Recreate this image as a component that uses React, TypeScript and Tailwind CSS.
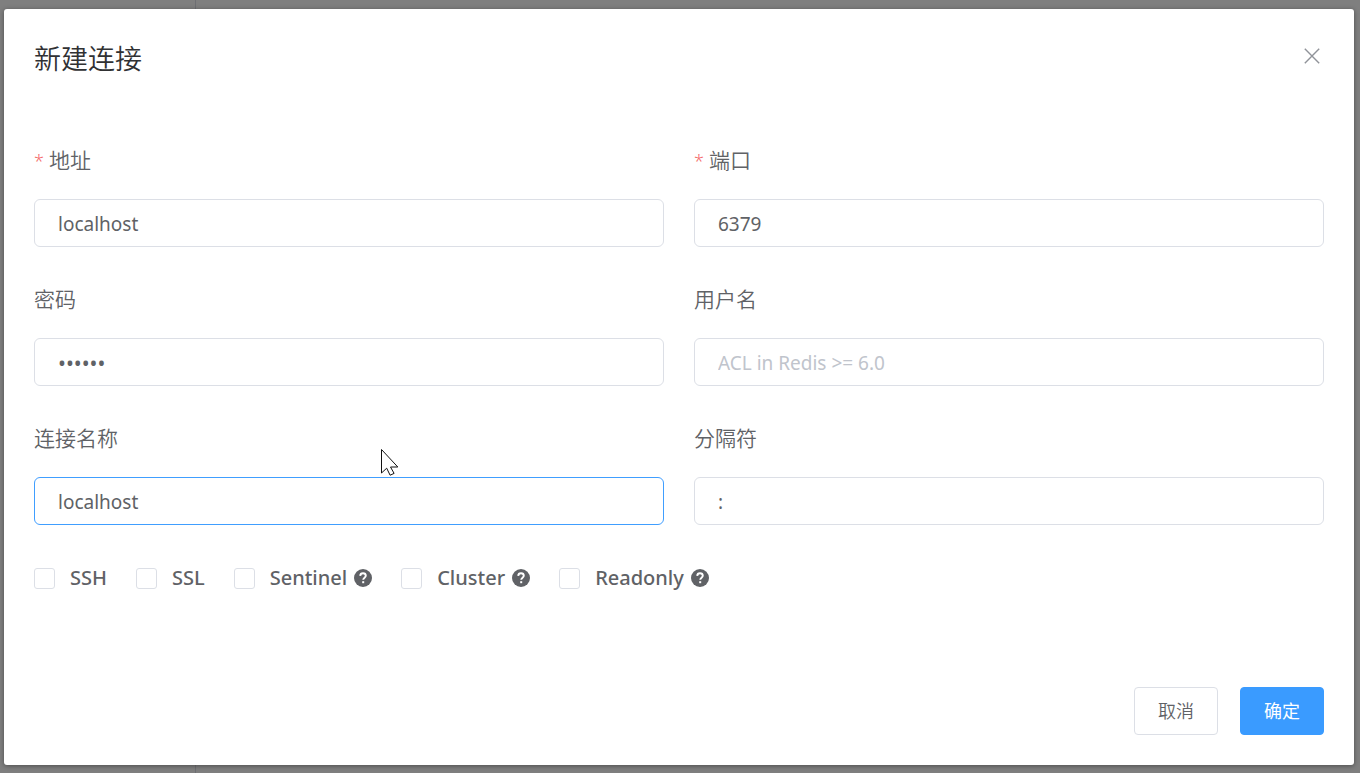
import { useState } from 'react';

interface FieldProps {
    id: string;
    label: string;
    value?: string;
    type?: string;
    placeholder?: string;
    required?: boolean;
    active?: boolean;
}

const options = [
    { id: 'ssh', label: 'SSH', help: false },
    { id: 'ssl', label: 'SSL', help: false },
    { id: 'sentinel', label: 'Sentinel', help: true },
    { id: 'cluster', label: 'Cluster', help: true },
    { id: 'readonly', label: 'Readonly', help: true },
];

const Field = ({ id, label, value = '', type = 'text', placeholder, required, active }: FieldProps) => {
    const [text, setText] = useState(value);
    return (
        <div>
            <label htmlFor={id} className="flex h-[60px] items-center gap-[5px] pt-0.5 text-[21px] font-[350] text-[#606266]">
                {required && <span className="text-lg text-[#f56c6c]">*</span>}
                {label}
            </label>
            <input
                id={id}
                type={type}
                value={text}
                placeholder={placeholder}
                onChange={(e) => setText(e.target.value)}
                className={`mt-[9px] block h-12 w-full rounded-md border bg-white px-[23px] pt-0.5 text-[#606266] outline-none placeholder:text-[#c0c4cc] focus:border-[#409eff] ${type === 'password' ? 'text-[21px]' : 'text-[19px]'} ${active ? 'border-[#409eff]' : 'border-[#dcdfe6]'}`}
            />
        </div>
    )
}

const HelpIcon = () => (
    <svg className="h-[18px] w-[18px]" viewBox="0 0 18 18" aria-hidden="true">
        <circle cx="9" cy="9" r="9" fill="#606266" />
        <path d="M6.2 6.9C6.3 5.2 7.4 4.3 9 4.3s2.8 1 2.8 2.5c0 1.9-2.6 1.9-2.6 4" fill="none" stroke="#fff" strokeWidth="1.9" />
        <rect x="8.2" y="12.2" width="2" height="2" fill="#fff" />
    </svg>
)

const Pointer = () => (
    <svg className="pointer-events-none absolute left-[377px] top-[440px] h-7 w-5" viewBox="0 0 20 28" aria-hidden="true">
        <path d="M.5.5V24l5.2-4.8 3.4 7 4-1.8-3.6-6.4h7.3z" fill="#fff" stroke="#111" strokeWidth="1" />
    </svg>
)

const App = () => {
    return (
        <div className="relative min-h-screen bg-white font-['Noto_Sans','Noto_Sans_CJK_SC',sans-serif]">
            <aside className="absolute inset-y-0 left-0 w-[196px] border-r border-[#dcdfe6]" />
            <div className="relative min-h-screen bg-black/50 pt-[9px] pr-1.5 pb-2 pl-1">
                <div role="dialog" aria-labelledby="title" className="relative rounded-[3px] bg-white p-[30px] shadow-[0_1px_5px_rgba(0,0,0,0.4)]">
                    <header className="flex items-start justify-between">
                        <h1 id="title" className="text-[27px] leading-10 font-[350] text-[#303133]">新建连接</h1>
                        <button type="button" aria-label="Close" className="mt-[9px] mr-1 text-[#909399]">
                            <svg className="h-4 w-4" viewBox="0 0 16 16" fill="none" stroke="currentColor" strokeWidth="1.4">
                                <path d="M.8.8l14.4 14.4M15.2.8L.8 15.2" />
                            </svg>
                        </button>
                    </header>
                    <form className="mt-[51px]">
                        <div className="grid grid-cols-2 gap-x-[30px] gap-y-[22px]">
                            <Field id="host" label="地址" value="localhost" required />
                            <Field id="port" label="端口" value="6379" required />
                            <Field id="auth" label="密码" value="123456" type="password" />
                            <Field id="username" label="用户名" placeholder="ACL in Redis >= 6.0" />
                            <Field id="name" label="连接名称" value="localhost" active />
                            <Field id="separator" label="分隔符" value=":" />
                        </div>
                        <div className="mt-[38px] flex gap-[29px]">
                            {options.map((o) => (
                                <div key={o.id} className="flex h-[30px] items-center gap-[7px]">
                                    <input id={o.id} type="checkbox" className="mr-2 h-[21px] w-[21px] appearance-none rounded-[3px] border border-[#dcdfe6] bg-white checked:bg-[#409eff]" />
                                    <label htmlFor={o.id} className="text-[20px] font-medium text-[#606266]">{o.label}</label>
                                    {o.help && <HelpIcon />}
                                </div>
                            ))}
                        </div>
                        <footer className="mt-[94px] flex justify-end gap-[22px] text-[18px] font-[350]">
                            <button type="button" className="h-12 rounded-[4px] border border-[#dcdfe6] bg-white px-[23px] text-[#606266]">取消</button>
                            <button type="button" className="h-12 rounded-[4px] border border-[#3a9bff] bg-[#3a9bff] px-[23px] font-normal text-white">确定</button>
                        </footer>
                    </form>
                    <Pointer />
                </div>
            </div>
        </div>
    )
}

export default App
